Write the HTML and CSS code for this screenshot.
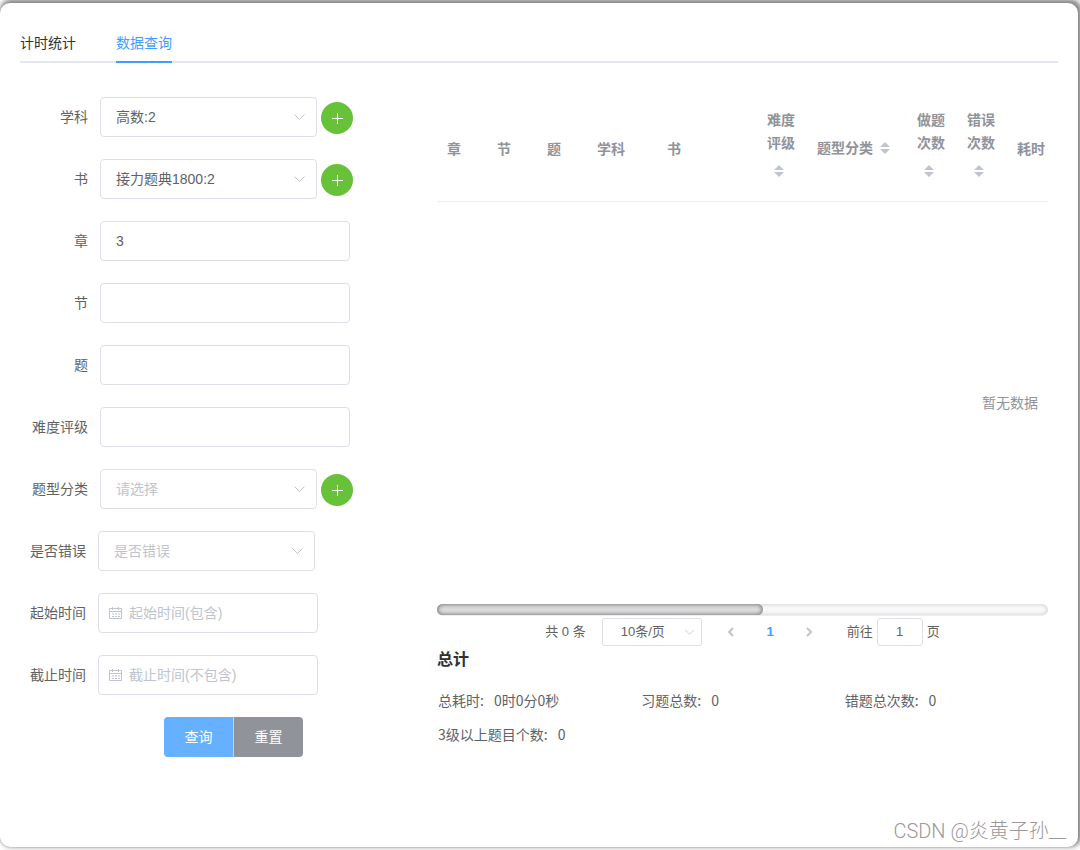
FILE: index.html
```html
<!DOCTYPE html>
<html lang="zh-CN">
<head>
<meta charset="utf-8">
<meta name="viewport" content="width=device-width, initial-scale=1">
<title>数据查询</title>
<link rel="stylesheet" href="styles.css">
</head>
<body>
<svg class="symbols" aria-hidden="true">
  <symbol id="chevron" viewBox="0 0 14 14"><path d="M1.500 4.500 6.500 9.500 11.500 4.500" fill="none" stroke="currentColor"/></symbol>
  <symbol id="plus" viewBox="0 0 14 14"><path d="M2 7.500h11M7.500 2v11" fill="none" stroke="currentColor"/></symbol>
  <symbol id="calendar" viewBox="0 0 14 14"><path d="M1.500 2.500h12v10h-12zM1.500 5.500h12M4.500 1v3M10.500 1v3M4 8h2M7 8h2M10 8h2M4 10.500h2M7 10.500h2M10 10.500h2" fill="none" stroke="currentColor"/></symbol>
  <symbol id="sort" viewBox="0 0 10 14"><path d="M0 5 5 0l5 5zM0 7h10l-5 5z" fill="currentColor"/></symbol>
</svg>
<main class="panel">
  <nav class="tabs">
    <a class="tab" href="#timer">计时统计</a>
    <a class="tab tab-active" href="#query">数据查询</a>
  </nav>
  <div class="content">
    <form class="form">
      <div class="row">
        <label class="label" for="subject">学科</label>
        <div class="field">
          <select class="control" id="subject"><option>高数:2</option></select>
          <svg class="chevron"><use href="#chevron"/></svg>
        </div>
        <button class="add" type="button" aria-label="添加学科"><svg class="icon"><use href="#plus"/></svg></button>
      </div>
      <div class="row">
        <label class="label" for="book">书</label>
        <div class="field">
          <select class="control" id="book"><option>接力题典1800:2</option></select>
          <svg class="chevron"><use href="#chevron"/></svg>
        </div>
        <button class="add" type="button" aria-label="添加书"><svg class="icon"><use href="#plus"/></svg></button>
      </div>
      <div class="row">
        <label class="label" for="chapter">章</label>
        <div class="field field-wide"><input class="control" id="chapter" type="text" value="3"></div>
      </div>
      <div class="row">
        <label class="label" for="section">节</label>
        <div class="field field-wide"><input class="control" id="section" type="text"></div>
      </div>
      <div class="row">
        <label class="label" for="question">题</label>
        <div class="field field-wide"><input class="control" id="question" type="text"></div>
      </div>
      <div class="row">
        <label class="label" for="level">难度评级</label>
        <div class="field field-wide"><input class="control" id="level" type="text"></div>
      </div>
      <div class="row">
        <label class="label" for="category">题型分类</label>
        <div class="field">
          <select class="control control-empty" id="category"><option>请选择</option></select>
          <svg class="chevron"><use href="#chevron"/></svg>
        </div>
        <button class="add" type="button" aria-label="添加题型分类"><svg class="icon"><use href="#plus"/></svg></button>
      </div>
      <div class="row">
        <label class="label label-narrow" for="wrong">是否错误</label>
        <div class="field">
          <select class="control control-empty" id="wrong"><option>是否错误</option></select>
          <svg class="chevron"><use href="#chevron"/></svg>
        </div>
      </div>
      <div class="row">
        <label class="label label-narrow" for="start">起始时间</label>
        <div class="field field-date">
          <input class="control" id="start" type="text" placeholder="起始时间(包含)">
          <svg class="calendar"><use href="#calendar"/></svg>
        </div>
      </div>
      <div class="row">
        <label class="label label-narrow" for="end">截止时间</label>
        <div class="field field-date">
          <input class="control" id="end" type="text" placeholder="截止时间(不包含)">
          <svg class="calendar"><use href="#calendar"/></svg>
        </div>
      </div>
      <div class="actions">
        <button class="action action-query" type="button">查询</button>
        <button class="action action-reset" type="reset">重置</button>
      </div>
    </form>
    <section class="results">
      <div class="table-view">
        <table class="table">
          <colgroup>
            <col class="col-s"><col class="col-s"><col class="col-s"><col class="col-m"><col class="col-l">
            <col class="col-s"><col class="col-l"><col class="col-s"><col class="col-s"><col>
          </colgroup>
          <thead>
            <tr>
              <th>章</th><th>节</th><th>题</th><th>学科</th><th>书</th>
              <th>难度<br>评级<br><span class="sort"><svg class="sort-icon"><use href="#sort"/></svg></span></th>
              <th>题型分类<span class="sort"><svg class="sort-icon"><use href="#sort"/></svg></span></th>
              <th>做题<br>次数<br><span class="sort"><svg class="sort-icon"><use href="#sort"/></svg></span></th>
              <th>错误<br>次数<br><span class="sort"><svg class="sort-icon"><use href="#sort"/></svg></span></th>
              <th>耗时</th>
            </tr>
          </thead>
          <tbody>
            <tr><td class="empty" colspan="10">暂无数据</td></tr>
          </tbody>
        </table>
      </div>
      <div class="scrollbar"><div class="thumb"></div></div>
      <div class="pagination">
        <span class="total">共 0 条</span>
        <div class="page-size">
          <select class="control control-small" aria-label="每页条数"><option>10条/页</option></select>
          <svg class="chevron chevron-small"><use href="#chevron"/></svg>
        </div>
        <button class="page" type="button" aria-label="上一页"><svg class="arrow" viewBox="0 0 12 12"><path d="M8 2 4 6l4 4"/></svg></button>
        <button class="page page-current" type="button">1</button>
        <button class="page" type="button" aria-label="下一页"><svg class="arrow" viewBox="0 0 12 12"><path d="m4 2 4 4-4 4"/></svg></button>
        <label class="jump">前往<input class="jump-input" type="text" value="1">页</label>
      </div>
      <h2 class="summary-title">总计</h2>
      <dl class="summary">
        <div class="item"><dt>总耗时:</dt><dd>0时0分0秒</dd></div>
        <div class="item"><dt>习题总数:</dt><dd>0</dd></div>
        <div class="item"><dt>错题总次数:</dt><dd>0</dd></div>
        <div class="item"><dt>3级以上题目个数:</dt><dd>0</dd></div>
      </dl>
    </section>
  </div>
  <div class="watermark">CSDN @炎黄子孙__</div>
</main>
</body>
</html>
```
FILE: styles.css
```css
* { box-sizing: border-box; }

body {
  margin: 0;
  padding: 3px 2px 3px 0;
  min-height: 100vh;
  display: flex;
  background: #fff;
  color: #606266;
  font: 14px/20px "Liberation Sans", "Noto Sans CJK SC", sans-serif;
  overflow-x: hidden;
}

button, input, select { font: inherit; color: inherit; margin: 0; }
button { cursor: pointer; }

.symbols { position: absolute; width: 0; height: 0; }

.panel {
  position: relative;
  flex: 1;
  min-width: 0;
  padding: 20px;
  border-radius: 10px;
  background: #fff;
  box-shadow: 0 0 1px #888, 2px -2px 5px 2px #888;
}

.tabs {
  display: flex;
  gap: 40px;
  border-bottom: 2px solid #e4e7ed;
}

.tab {
  height: 40px;
  margin-bottom: -2px;
  line-height: 40px;
  color: #303133;
  text-decoration: none;
}

.tab-active {
  color: #409eff;
  border-bottom: 2px solid #409eff;
}

.content {
  display: grid;
  grid-template-columns: 417px minmax(0, 1fr);
  padding: 34px 10px 0 0;
}

.form {
  display: flex;
  flex-direction: column;
  gap: 22px;
}

.row { display: flex; align-items: center; }

.label {
  width: 80px;
  padding-right: 12px;
  text-align: right;
}

.label-narrow { width: 78px; }

.field { position: relative; width: 217px; }
.field-wide { width: 250px; }
.field-date { width: 220px; }

.control {
  display: block;
  appearance: none;
  width: 100%;
  height: 40px;
  padding: 0 15px;
  border: 1px solid #dcdfe6;
  border-radius: 4px;
  background: #fff;
  outline: none;
}

.control-empty { color: #c0c4cc; }
.control::placeholder { color: #c0c4cc; opacity: 1; }
.field-date .control { padding-left: 30px; }

.chevron, .calendar {
  position: absolute;
  top: 13px;
  width: 14px;
  height: 14px;
  color: #c0c4cc;
  pointer-events: none;
}

.chevron { right: 10px; }
.calendar { left: 10px; }

.add {
  width: 32px;
  height: 32px;
  margin: 2px 0 0 4px;
  padding: 9px;
  border: 0;
  border-radius: 50%;
  background: #67c23a;
  color: #fff;
}

.icon { display: block; width: 14px; height: 14px; }

.actions { display: flex; padding-left: 144px; }

.action {
  width: 70px;
  height: 40px;
  padding: 0;
  border: 0;
  color: #fff;
}

.action-query {
  border-right: 1px solid #b3d8ff;
  border-radius: 4px 0 0 4px;
  background: #66b1ff;
}

.action-reset { width: 69px; border-radius: 0 4px 4px 0; background: #909399; }

.table-view { overflow: hidden; }

.table {
  width: 1146px;
  table-layout: fixed;
  border-collapse: collapse;
  color: #909399;
}

.col-s { width: 50px; }
.col-m { width: 70px; }
.col-l { width: 100px; }

.table th {
  padding: 12px 0 12px 10px;
  border-bottom: 1px solid #ebeef5;
  font-weight: 700;
  line-height: 23px;
  text-align: left;
  white-space: nowrap;
}

.sort {
  display: inline-flex;
  align-items: center;
  justify-content: center;
  width: 24px;
  height: 34px;
  vertical-align: middle;
  color: #c0c4cc;
}

.sort-icon { width: 10px; height: 14px; }

.table .empty { height: 402px; padding: 0; text-align: center; }

.scrollbar {
  height: 12px;
  border-bottom: 1px solid #ebeef5;
  border-radius: 6px;
  background: #fafafa;
  box-shadow: inset 0 0 5px rgba(0, 0, 0, 0.2);
}

.thumb {
  width: 53.3%;
  height: 11px;
  border-radius: 6px;
  background: #dedede;
  box-shadow: inset 0 0 5px rgba(0, 0, 0, 0.6);
}

.pagination {
  display: flex;
  align-items: center;
  justify-content: center;
  height: 32px;
  font-size: 13px;
  white-space: nowrap;
}

.page-size { position: relative; width: 100px; margin: 0 10px 0 16px; }

.control-small { height: 28px; padding: 0 18px; border-radius: 3px; }

.chevron-small { top: 8px; right: 6px; width: 12px; height: 12px; }

.page {
  display: flex;
  align-items: center;
  justify-content: center;
  width: 39px;
  height: 28px;
  padding: 0;
  border: 0;
  background: none;
}

.page-current { color: #409eff; font-weight: 700; }

.arrow {
  width: 12px;
  height: 12px;
  fill: none;
  stroke: #c0c4cc;
  stroke-width: 2;
}

.jump { display: flex; align-items: center; gap: 4px; margin-left: 18px; }

.jump-input {
  width: 46px;
  height: 28px;
  padding: 0;
  border: 1px solid #dcdfe6;
  border-radius: 4px;
  text-align: center;
}

.summary-title {
  margin: 0 0 17px;
  color: #303133;
  font-size: 16px;
  line-height: 24px;
}

.summary {
  display: grid;
  grid-template-columns: repeat(3, 1fr);
  row-gap: 12px;
  margin: 0;
  padding-left: 1px;
  font-family: "Noto Sans CJK SC", sans-serif;
  line-height: 22px;
}

.item { display: flex; gap: 10px; }
.item dd { margin: 0; }

.watermark {
  position: absolute;
  right: 12px;
  bottom: 3px;
  color: #999;
  font-family: Roboto, "Noto Sans CJK SC", sans-serif;
  font-size: 20px;
  font-weight: 300;
  line-height: 26px;
}
```
